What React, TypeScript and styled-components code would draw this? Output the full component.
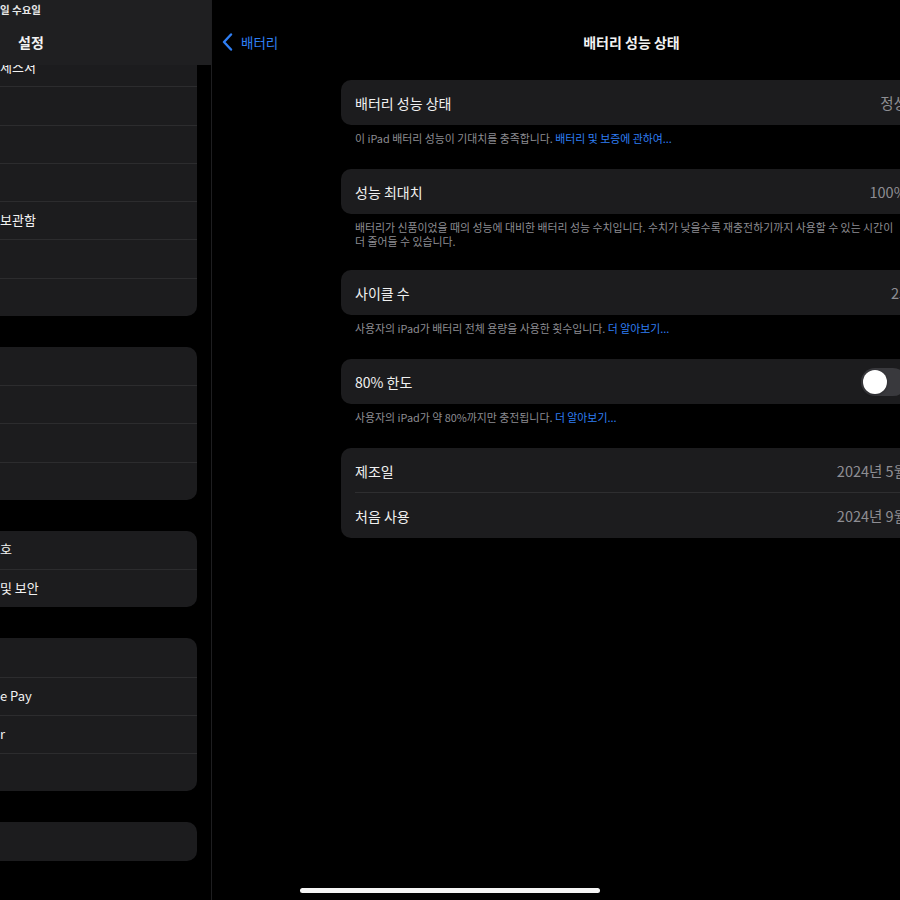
import React from 'react';
import styled, { createGlobalStyle } from 'styled-components';

const FONT = `'Noto Sans CJK KR', 'Noto Sans', Inter, sans-serif`;

const GlobalStyle = createGlobalStyle`
  html, body {
    margin: 0;
    padding: 0;
    background: #000000;
    overflow: hidden;
  }
  body {
    font-family: ${FONT};
    -webkit-font-smoothing: antialiased;
  }
`;

type SideRowData = { label?: string };

const sideGroups: SideRowData[][] = [
  [{ label: '세스서' }, {}, {}, {}, { label: '보관함' }, {}, {}],
  [{}, {}, {}, {}],
  [{ label: '호' }, { label: '및 보안' }],
  [{}, { label: 'e Pay' }, { label: 'r' }, {}],
  [{}],
];

const ChevronLeft: React.FC = () => (
  <svg width="11" height="18" viewBox="0 0 11 18" fill="none">
    <path
      d="M9 1.5L2 9l7 7.5"
      stroke="#2f7ff4"
      strokeWidth="2.4"
      strokeLinecap="round"
      strokeLinejoin="round"
    />
  </svg>
);

const App: React.FC = () => (
  <>
    <GlobalStyle />
    <Screen>
      <Sidebar>
        <SideHeader>
          <StatusText>일 수요일</StatusText>
          <SideTitle>설정</SideTitle>
        </SideHeader>
        <SideScroll>
          <SideList>
            {sideGroups.map((group, gi) => (
              <SideCard key={gi}>
                {group.map((row, ri) => (
                  <SideRow key={ri}>{row.label}</SideRow>
                ))}
              </SideCard>
            ))}
          </SideList>
        </SideScroll>
      </Sidebar>

      <Detail>
        <NavBar>
          <BackButton>
            <ChevronLeft />
            <span>배터리</span>
          </BackButton>
          <NavTitle>배터리 성능 상태</NavTitle>
          <span />
        </NavBar>

        <Content>
          <Card>
            <Row>
              <RowLabel>배터리 성능 상태</RowLabel>
              <RowValue>정상</RowValue>
            </Row>
          </Card>
          <Footer>
            이 iPad 배터리 성능이 기대치를 충족합니다. <Link>배터리 및 보증에 관하여...</Link>
          </Footer>

          <Card>
            <Row>
              <RowLabel>성능 최대치</RowLabel>
              <RowValue>100%</RowValue>
            </Row>
          </Card>
          <Footer $tight>
            배터리가 신품이었을 때의 성능에 대비한 배터리 성능 수치입니다. 수치가 낮을수록 재충전하기까지 사용할 수 있는 시간이
            <br />
            더 줄어들 수 있습니다.
          </Footer>

          <Card>
            <Row>
              <RowLabel>사이클 수</RowLabel>
              <RowValue>25</RowValue>
            </Row>
          </Card>
          <Footer>
            사용자의 iPad가 배터리 전체 용량을 사용한 횟수입니다. <Link>더 알아보기...</Link>
          </Footer>

          <Card>
            <Row>
              <RowLabel>80% 한도</RowLabel>
              <Toggle>
                <Knob />
              </Toggle>
            </Row>
          </Card>
          <Footer>
            사용자의 iPad가 약 80%까지만 충전됩니다. <Link>더 알아보기...</Link>
          </Footer>

          <Card>
            <Row $divider>
              <RowLabel>제조일</RowLabel>
              <RowValue>2024년 5월</RowValue>
            </Row>
            <Row>
              <RowLabel>처음 사용</RowLabel>
              <RowValue>2024년 9월</RowValue>
            </Row>
          </Card>
        </Content>
      </Detail>

      <HomeIndicator />
    </Screen>
  </>
);

const Screen = styled.div`
  position: relative;
  display: flex;
  width: 900px;
  height: 900px;
  overflow: hidden;
  background: #000000;
  color: #ffffff;
  font-family: ${FONT};
`;

const Sidebar = styled.aside`
  position: relative;
  flex: 0 0 211px;
  display: flex;
  flex-direction: column;
  border-right: 1px solid #1e1e20;
  background: #000000;
`;

const SideHeader = styled.div`
  position: relative;
  z-index: 1;
  flex: 0 0 65px;
  display: flex;
  flex-direction: column;
  background: #1f1f21;
`;

const StatusText = styled.div`
  padding: 3px 0 0 0;
  font-size: 10.5px;
  font-weight: 600;
  line-height: 14px;
  color: #e8e8e8;
  white-space: nowrap;
`;

const SideTitle = styled.div`
  padding: 16px 0 0 18px;
  font-size: 14px;
  font-weight: 700;
  line-height: 18px;
  color: #f2f2f2;
`;

const SideScroll = styled.div`
  flex: 1;
  overflow: hidden;
`;

const SideList = styled.div`
  display: flex;
  flex-direction: column;
  gap: 31px;
  margin-top: -17px;
`;

const SideCard = styled.div`
  width: 197px;
  background: #1c1c1e;
  border-radius: 0 10px 10px 0;
  overflow: hidden;
`;

const SideRow = styled.div`
  box-sizing: border-box;
  height: 38.25px;
  display: flex;
  align-items: center;
  padding-bottom: 2px;
  font-size: 13px;
  color: #f2f2f2;
  white-space: nowrap;

  & + & {
    border-top: 1px solid #2c2c2e;
  }
`;

const Detail = styled.main`
  flex: 0 0 839px;
  display: flex;
  flex-direction: column;
`;

const NavBar = styled.div`
  flex: 0 0 65px;
  display: grid;
  grid-template-columns: 1fr auto 1fr;
  align-items: center;
  padding: 18px 10px 0;
  box-sizing: border-box;
`;

const BackButton = styled.div`
  display: flex;
  align-items: center;
  gap: 8px;
  font-size: 13.5px;
  color: #2f7ff4;
`;

const NavTitle = styled.div`
  font-size: 14px;
  font-weight: 700;
  color: #f2f2f2;
`;

const Content = styled.div`
  width: 581px;
  margin: 15px auto 0;
  display: flex;
  flex-direction: column;
`;

const Card = styled.div`
  background: #1c1c1e;
  border-radius: 10px;
  overflow: hidden;
`;

const Row = styled.div<{ $divider?: boolean }>`
  position: relative;
  height: 45px;
  display: flex;
  align-items: center;
  justify-content: space-between;
  padding: 0 15px 0 14px;

  &::after {
    content: '';
    display: ${({ $divider }) => ($divider ? 'block' : 'none')};
    position: absolute;
    left: 14px;
    right: 0;
    bottom: 0;
    height: 1px;
    background: #2e2e30;
  }
`;

const RowLabel = styled.span`
  font-size: 14px;
  color: #f0f0f0;
`;

const RowValue = styled.span`
  font-size: 14.5px;
  color: #8e8e93;
`;

const Toggle = styled.div`
  width: 46px;
  height: 28px;
  border-radius: 14px;
  background: #39393d;
  padding: 2px;
  box-sizing: border-box;
  display: flex;
  align-items: center;
`;

const Knob = styled.div`
  width: 24px;
  height: 24px;
  border-radius: 50%;
  background: #ffffff;
  box-shadow: 0 1px 3px rgba(0, 0, 0, 0.3);
`;

const Footer = styled.p<{ $tight?: boolean }>`
  margin: 0 0 ${({ $tight }) => ($tight ? '22px' : '24px')};
  padding: 6px 14px 0;
  font-size: 10.9px;
  line-height: 14px;
  color: #8d8d92;
  white-space: nowrap;
`;

const Link = styled.span`
  color: #2f7ff4;
`;

const HomeIndicator = styled.div`
  position: absolute;
  left: 300px;
  bottom: 7px;
  width: 300px;
  height: 5px;
  border-radius: 3px;
  background: #f5f5f5;
`;

export default App;
